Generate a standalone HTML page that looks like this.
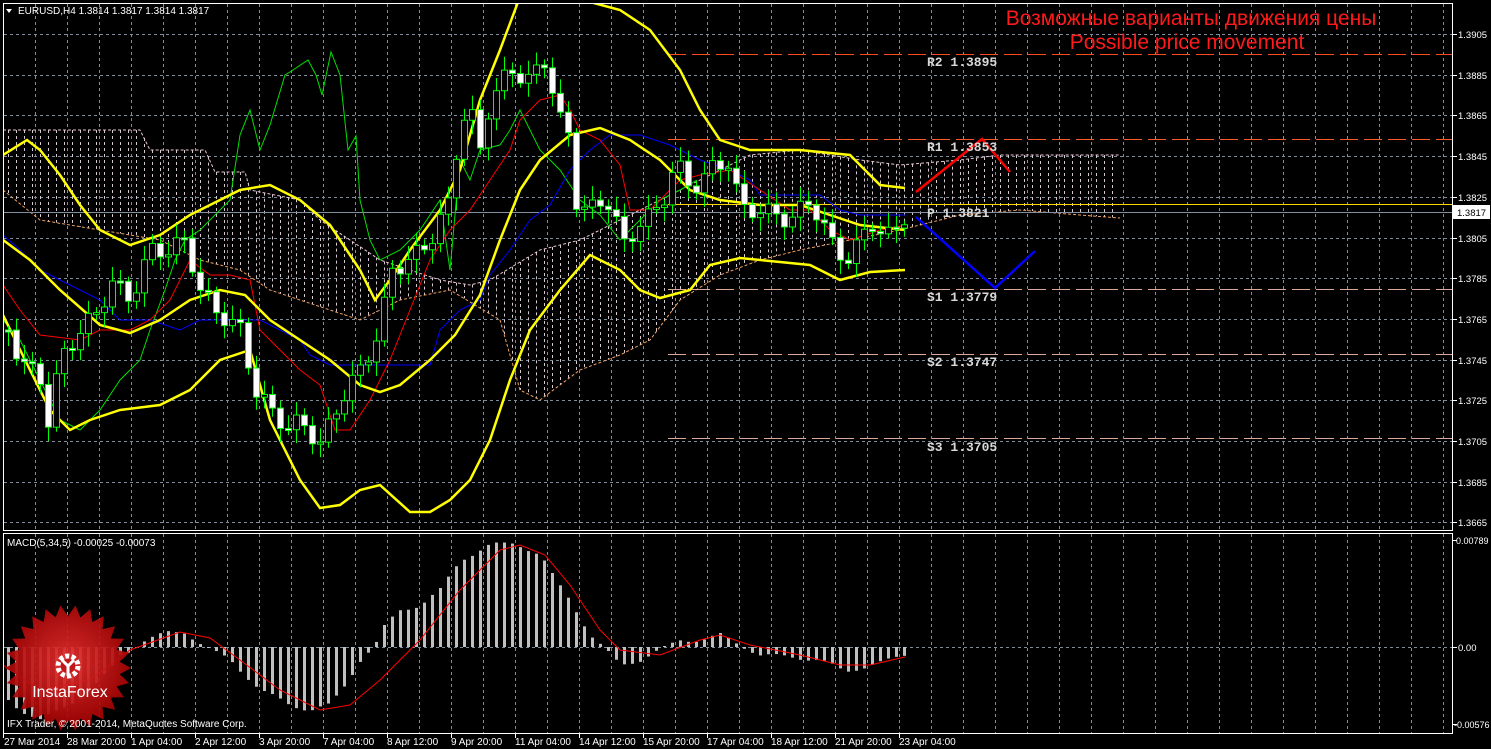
<!DOCTYPE html>
<html><head><meta charset="utf-8">
<style>
html,body{margin:0;padding:0;background:#000;width:1491px;height:749px;overflow:hidden}
svg{display:block}
text{font-family:"Liberation Sans",sans-serif}
text.mono{font-family:"Liberation Mono",monospace;font-weight:bold}
</style></head>
<body>
<svg id="s" width="1491" height="749" xmlns="http://www.w3.org/2000/svg">
<defs>
<clipPath id="cp"><rect x="4" y="4" width="1448" height="526"/></clipPath>
<clipPath id="cm"><rect x="4" y="534" width="1448" height="199"/></clipPath>
<radialGradient id="rg" cx="50%" cy="45%" r="55%"><stop offset="0" stop-color="#e83030"/><stop offset="1" stop-color="#a00000"/></radialGradient>
</defs>
<rect width="1491" height="749" fill="#000"/>
<g id="grid"></g>
<g id="cloud" clip-path="url(#cp)"></g>
<g id="lines" clip-path="url(#cp)"></g>
<g id="candles" clip-path="url(#cp)"></g>
<g id="macd" clip-path="url(#cm)"></g>
<g id="logo"></g>
<g id="axis"></g>
</svg>
<script>
(function(){
function add(g,html){document.getElementById(g).insertAdjacentHTML('beforeend',html);}
function interp(pts,x){if(x<=pts[0][0])return pts[0][1];for(var i=1;i<pts.length;i++){if(x<=pts[i][0]){var a=pts[i-1],b=pts[i];return a[1]+(b[1]-a[1])*(x-a[0])/(b[0]-a[0]);}}return pts[pts.length-1][1];}
function pl(pts,col,w,extra){return '<polyline fill="none" stroke="'+col+'" stroke-width="'+w+'" points="'+pts.map(function(p){return p.join(',')}).join(' ')+'" '+(extra||'')+'/>';}
var s='';
for(var k=0;k<13;k++){var y=Math.round(34+k*40.7)+0.5;s+='<line x1="4" x2="1452" y1="'+y+'" y2="'+y+'" stroke="#7e8c9c" stroke-dasharray="3,3"/>';}
for(var x=35;x<1452;x+=32){s+='<line x1="'+(x+.5)+'" x2="'+(x+.5)+'" y1="4" y2="530" stroke="#7e8c9c" stroke-dasharray="3,3"/>';s+='<line x1="'+(x+.5)+'" x2="'+(x+.5)+'" y1="534" y2="733" stroke="#7e8c9c" stroke-dasharray="3,3"/>';}
s+='<line x1="4" x2="1452" y1="647.5" y2="647.5" stroke="#7e8c9c" stroke-dasharray="3,3"/>';
add('grid',s);
var ctop=[[3,130],[140,130],[150,150],[205,150],[215,172],[245,172],[250,190],[300,200],[320,220],[350,240],[380,260],[410,270],[440,280],[470,285],[490,280],[540,250],[580,240],[620,220],[660,200],[700,180],[750,155],[800,150],[860,160],[900,165],[960,160],[1000,155],[1120,155]];
var cbot=[[3,190],[40,220],[100,230],[160,240],[200,260],[240,270],[270,290],[300,300],[330,310],[360,320],[400,300],[450,290],[500,320],[520,390],[540,400],[580,370],[620,355],[650,340],[680,300],[720,275],[760,260],[800,250],[850,240],[900,230],[960,215],[1020,210],[1080,215],[1120,218]];
s='';
for(var x=8;x<=1118;x+=8){var a=interp(ctop,x),b=interp(cbot,x);s+='<line x1="'+(x+.5)+'" x2="'+(x+.5)+'" y1="'+a+'" y2="'+b+'" stroke="#d8c8d0" stroke-dasharray="3,3"/>';}
s+=pl(ctop,'#e8c8d0',1,'stroke-dasharray="3,2"');
s+=pl(cbot,'#f0a060',1,'stroke-dasharray="3,2"');
add('cloud',s);
s='';
function hl(y,col){return '<line x1="668" x2="1452" y1="'+y+'" y2="'+y+'" stroke="'+col+'" stroke-dasharray="18,6"/>';}
s+=hl(54.5,'#ff4b1e');s+=hl(139.5,'#ff5a28');s+=hl(289.5,'#dca898');s+=hl(354.5,'#dca898');s+=hl(438.5,'#dca898');
s+='<line x1="668" x2="1452" y1="204.5" y2="204.5" stroke="#ffd700"/>';
s+='<line x1="4" x2="1452" y1="212.5" y2="212.5" stroke="#8090a0"/>';
var bup=[[3,155],[27,140],[40,150],[60,175],[80,205],[100,230],[130,245],[160,235],[190,215],[210,205],[240,190],[270,185],[300,200],[330,225],[360,270],[375,300],[390,280],[410,250],[440,210],[460,170],[480,100],[500,50],[518,2],[590,2],[620,10],[650,30],[680,70],[700,110],[720,140],[750,150],[800,150],[850,155],[880,185],[905,188]];
var bmid=[[3,240],[30,260],[60,290],[100,325],[130,333],[160,320],[190,300],[220,290],[245,295],[270,320],[300,340],[330,360],[360,385],[380,392],[400,385],[430,360],[455,335],[480,295],[500,240],[520,190],[540,160],[570,135],[600,128],[630,140],[660,160],[690,190],[720,200],[760,205],[800,205],[830,215],[860,225],[905,230]];
var blo=[[3,315],[30,370],[50,410],[70,430],[90,420],[120,410],[160,405],[190,390],[220,360],[250,350],[270,420],[300,480],[320,508],[340,505],[360,490],[380,485],[410,512],[430,512],[450,500],[470,480],[490,440],[510,380],[530,330],[560,290],[590,255],[620,270],[640,290],[660,298],[690,290],[710,265],[740,258],[780,262],[810,265],[840,280],[870,272],[905,270]];
var lgreen=[[3,320],[20,340],[40,380],[60,420],[80,430],[100,410],[120,380],[140,360],[150,330],[165,290],[175,260],[185,240],[200,230],[230,200],[240,135],[250,110],[260,150],[270,125],[285,75],[290,72],[308,60],[316,75],[322,95],[331,52],[340,75],[348,150],[356,136],[360,200],[370,240],[380,260],[400,250],[420,230],[440,200],[450,270],[460,160],[470,180],[480,150],[500,145],[510,130],[520,110],[540,150],[560,170],[580,200],[600,215],[620,240],[640,220],[660,200],[680,190],[697,180]];
var lred=[[3,285],[20,310],[40,335],[80,340],[100,330],[130,330],[150,320],[170,300],[190,260],[210,275],[230,275],[250,280],[260,330],[280,350],[300,370],[320,385],[335,430],[350,430],[370,400],[390,360],[410,310],[430,260],[450,230],[470,210],[490,180],[510,150],[520,120],[540,100],[560,95],[570,110],[580,130],[600,140],[620,165],[630,210],[650,210],[680,180],[700,175],[730,170],[760,190],[790,210],[810,210],[830,230],[850,240],[880,230],[905,225]];
var lblue=[[3,235],[20,250],[40,270],[60,280],[80,290],[100,300],[120,320],[150,320],[180,330],[200,320],[230,320],[260,320],[280,330],[300,340],[310,355],[330,365],[360,365],[430,365],[440,330],[460,310],[480,300],[490,275],[510,250],[530,220],[550,205],[570,170],[590,150],[610,135],[640,135],[670,145],[700,160],[730,170],[750,180],[760,195],[820,195],[840,210],[860,215],[905,215]];
s+=pl(lgreen,'#00e000',1);s+=pl(lblue,'#0000ff',1);s+=pl(lred,'#ff0000',1);
s+=pl(bup,'#ffff00',2.5);s+=pl(bmid,'#ffff00',2.5);s+=pl(blo,'#ffff00',2.5);
s+=pl([[916,192],[982,139],[1010,172]],'#ff0000',2.5);
s+=pl([[916,217],[995,288],[1035,251]],'#0000ff',2.5);
add('lines',s);
var cl=[[8,330],[20,360],[40,380],[48,420],[60,360],[80,330],[100,310],[110,280],[130,300],[150,250],[170,250],[185,240],[200,290],[215,310],[240,330],[255,390],[270,410],[290,430],[300,420],[320,445],[340,400],[360,370],[380,330],[390,270],[410,260],[430,240],[450,200],[460,120],[470,110],[480,150],[490,100],[510,70],[530,80],[545,60],[560,120],[570,140],[575,200],[590,210],[610,200],[625,250],[640,220],[660,210],[675,160],[690,190],[710,170],[730,160],[740,210],[760,210],[790,220],[810,200],[825,230],[835,250],[850,260],[870,220],[885,240],[905,215]];
s='';var prev=interp(cl,4);
for(var i=0;i<113;i++){var x=8+8*i;var c=interp(cl,x)+Math.sin(i*1.7)*9;var o=prev;prev=c;
var t=Math.min(o,c),b=Math.max(o,c);if(b-t<2){b=t+2;}
var hi=t-4-Math.abs(Math.sin(i*2.3))*10,lw=b+4+Math.abs(Math.cos(i*1.3))*10;
s+='<line x1="'+(x+.5)+'" x2="'+(x+.5)+'" y1="'+hi+'" y2="'+lw+'" stroke="#00ff00"/>';
var bull=c<o;s+='<rect x="'+(x-2.5)+'" y="'+t+'" width="6" height="'+(b-t)+'" fill="'+(bull?'#000':'#fff')+'" stroke="#00ff00"/>';}
add('candles',s);
var mh=[[8,700],[20,710],[40,720],[60,710],[90,690],[110,670],[120,655],[130,650],[145,640],[170,632],[185,632],[195,640],[210,650],[230,660],[260,690],[290,705],[310,710],[330,705],[345,685],[360,660],[375,645],[385,625],[400,610],[420,605],[440,590],[460,560],[490,545],[515,543],[540,555],[555,580],[570,600],[590,635],[605,650],[620,665],[640,660],[660,650],[680,640],[700,640],[720,635],[740,645],[760,655],[790,657],[820,660],[845,672],[870,665],[890,660],[905,655]];
var sig=[[3,665],[40,690],[90,680],[130,650],[180,632],[210,638],[240,660],[280,690],[320,710],[350,705],[380,680],[420,640],[460,590],[500,550],[520,545],[545,555],[570,585],[600,630],[620,650],[660,655],[700,640],[720,635],[750,645],[800,655],[840,665],[870,665],[905,657]];
s='';
for(var i=0;i<113;i++){var x=8+8*i;var v=interp(mh,x)+Math.sin(i*0.9)*2;var a=Math.min(v,647),b=Math.max(v,647);s+='<rect x="'+(x-1)+'" y="'+a+'" width="3" height="'+Math.max(1,b-a)+'" fill="#c0c0c0"/>';}
s+=pl(sig,'#ff0000',1);
add('macd',s);
s='';var pts=[];var N=26;for(var k=0;k<N*2;k++){var r=k%2?52:63;var an=k*Math.PI/N;pts.push((68+r*Math.cos(an)).toFixed(1)+','+(668+r*Math.sin(an)).toFixed(1));}
s+='<polygon points="'+pts.join(' ')+'" fill="url(#rg)" opacity="0.92"/>';
s+='<circle cx="68" cy="666" r="10" fill="none" stroke="#fff" stroke-width="5" stroke-dasharray="4,2.3"/><circle cx="68" cy="666" r="7" fill="#c01818"/>';
s+='<path d="M62 660 L68 666 L74 660 M68 666 L68 676" stroke="#fff" stroke-width="3" fill="none"/>';
s+='<text x="70" y="697" fill="#fff" font-size="16" text-anchor="middle">InstaForex</text>';
add('logo',s);
s='';
s+='<rect x="3.5" y="3.5" width="1449" height="527" fill="none" stroke="#fff"/>';
s+='<rect x="3.5" y="533.5" width="1449" height="200" fill="none" stroke="#fff"/>';
var labs=['1.3905','1.3885','1.3865','1.3845','1.3825','1.3805','1.3785','1.3765','1.3745','1.3725','1.3705','1.3685','1.3665'];
for(var k=0;k<13;k++){var y=Math.round(34+k*40.7);s+='<line x1="1453" x2="1457" y1="'+(y+.5)+'" y2="'+(y+.5)+'" stroke="#fff"/><text x="1458" y="'+(y+4)+'" fill="#fff" font-size="9.5">'+labs[k]+'</text>';}
s+='<rect x="1453" y="205" width="37" height="14" fill="#fff"/><text x="1457" y="216" fill="#000" font-size="9.5">1.3817</text>';
s+='<text x="1456" y="544" fill="#fff" font-size="9">0.00789</text><text x="1458" y="651" fill="#fff" font-size="9.5">0.00</text><text x="1454" y="728" fill="#fff" font-size="9">-0.00576</text>';
s+='<line x1="1453" x2="1457" y1="540.5" y2="540.5" stroke="#fff"/><line x1="1453" x2="1457" y1="647.5" y2="647.5" stroke="#fff"/><line x1="1453" x2="1457" y1="724.5" y2="724.5" stroke="#fff"/>';
var dl=['27 Mar 2014','28 Mar 20:00','1 Apr 04:00','2 Apr 12:00','3 Apr 20:00','7 Apr 04:00','8 Apr 12:00','9 Apr 20:00','11 Apr 04:00','14 Apr 12:00','15 Apr 20:00','17 Apr 04:00','18 Apr 12:00','21 Apr 20:00','23 Apr 04:00'];
for(var k=0;k<dl.length;k++){var x=3+64*k;s+='<line x1="'+(x+.5)+'" x2="'+(x+.5)+'" y1="734" y2="738" stroke="#fff"/><text x="'+(x+(k?0:1))+'" y="745" fill="#fff" font-size="10">'+dl[k]+'</text>';}
s+='<path d="M6 9 L12 9 L9 13 Z" fill="#fff"/><text x="18" y="14" fill="#fff" font-size="10">EURUSD,H4  1.3814 1.3817 1.3814 1.3817</text>';
s+='<text x="7" y="546" fill="#fff" font-size="10">MACD(5,34,5) -0.00025 -0.00073</text>';
s+='<text x="7" y="727" fill="#fff" font-size="10">IFX Trader, © 2001-2014, MetaQuotes Software Corp.</text>';
s+='<text x="1191" y="25" fill="#ff1a1a" font-size="21" text-anchor="middle">Возможные варианты движения цены</text>';
s+='<text x="1187" y="49" fill="#ff1a1a" font-size="21" text-anchor="middle">Possible price movement</text>';
var pv=[['R2 1.3895',66],['R1 1.3853',151],['P 1.3821',217],['S1 1.3779',301],['S2 1.3747',366],['S3 1.3705',451]];
pv.forEach(function(p){s+='<text class="mono" x="927" y="'+p[1]+'" fill="#d8d8d8" font-size="13">'+p[0]+'</text>';});
add('axis',s);
})();
</script>
</body></html>
